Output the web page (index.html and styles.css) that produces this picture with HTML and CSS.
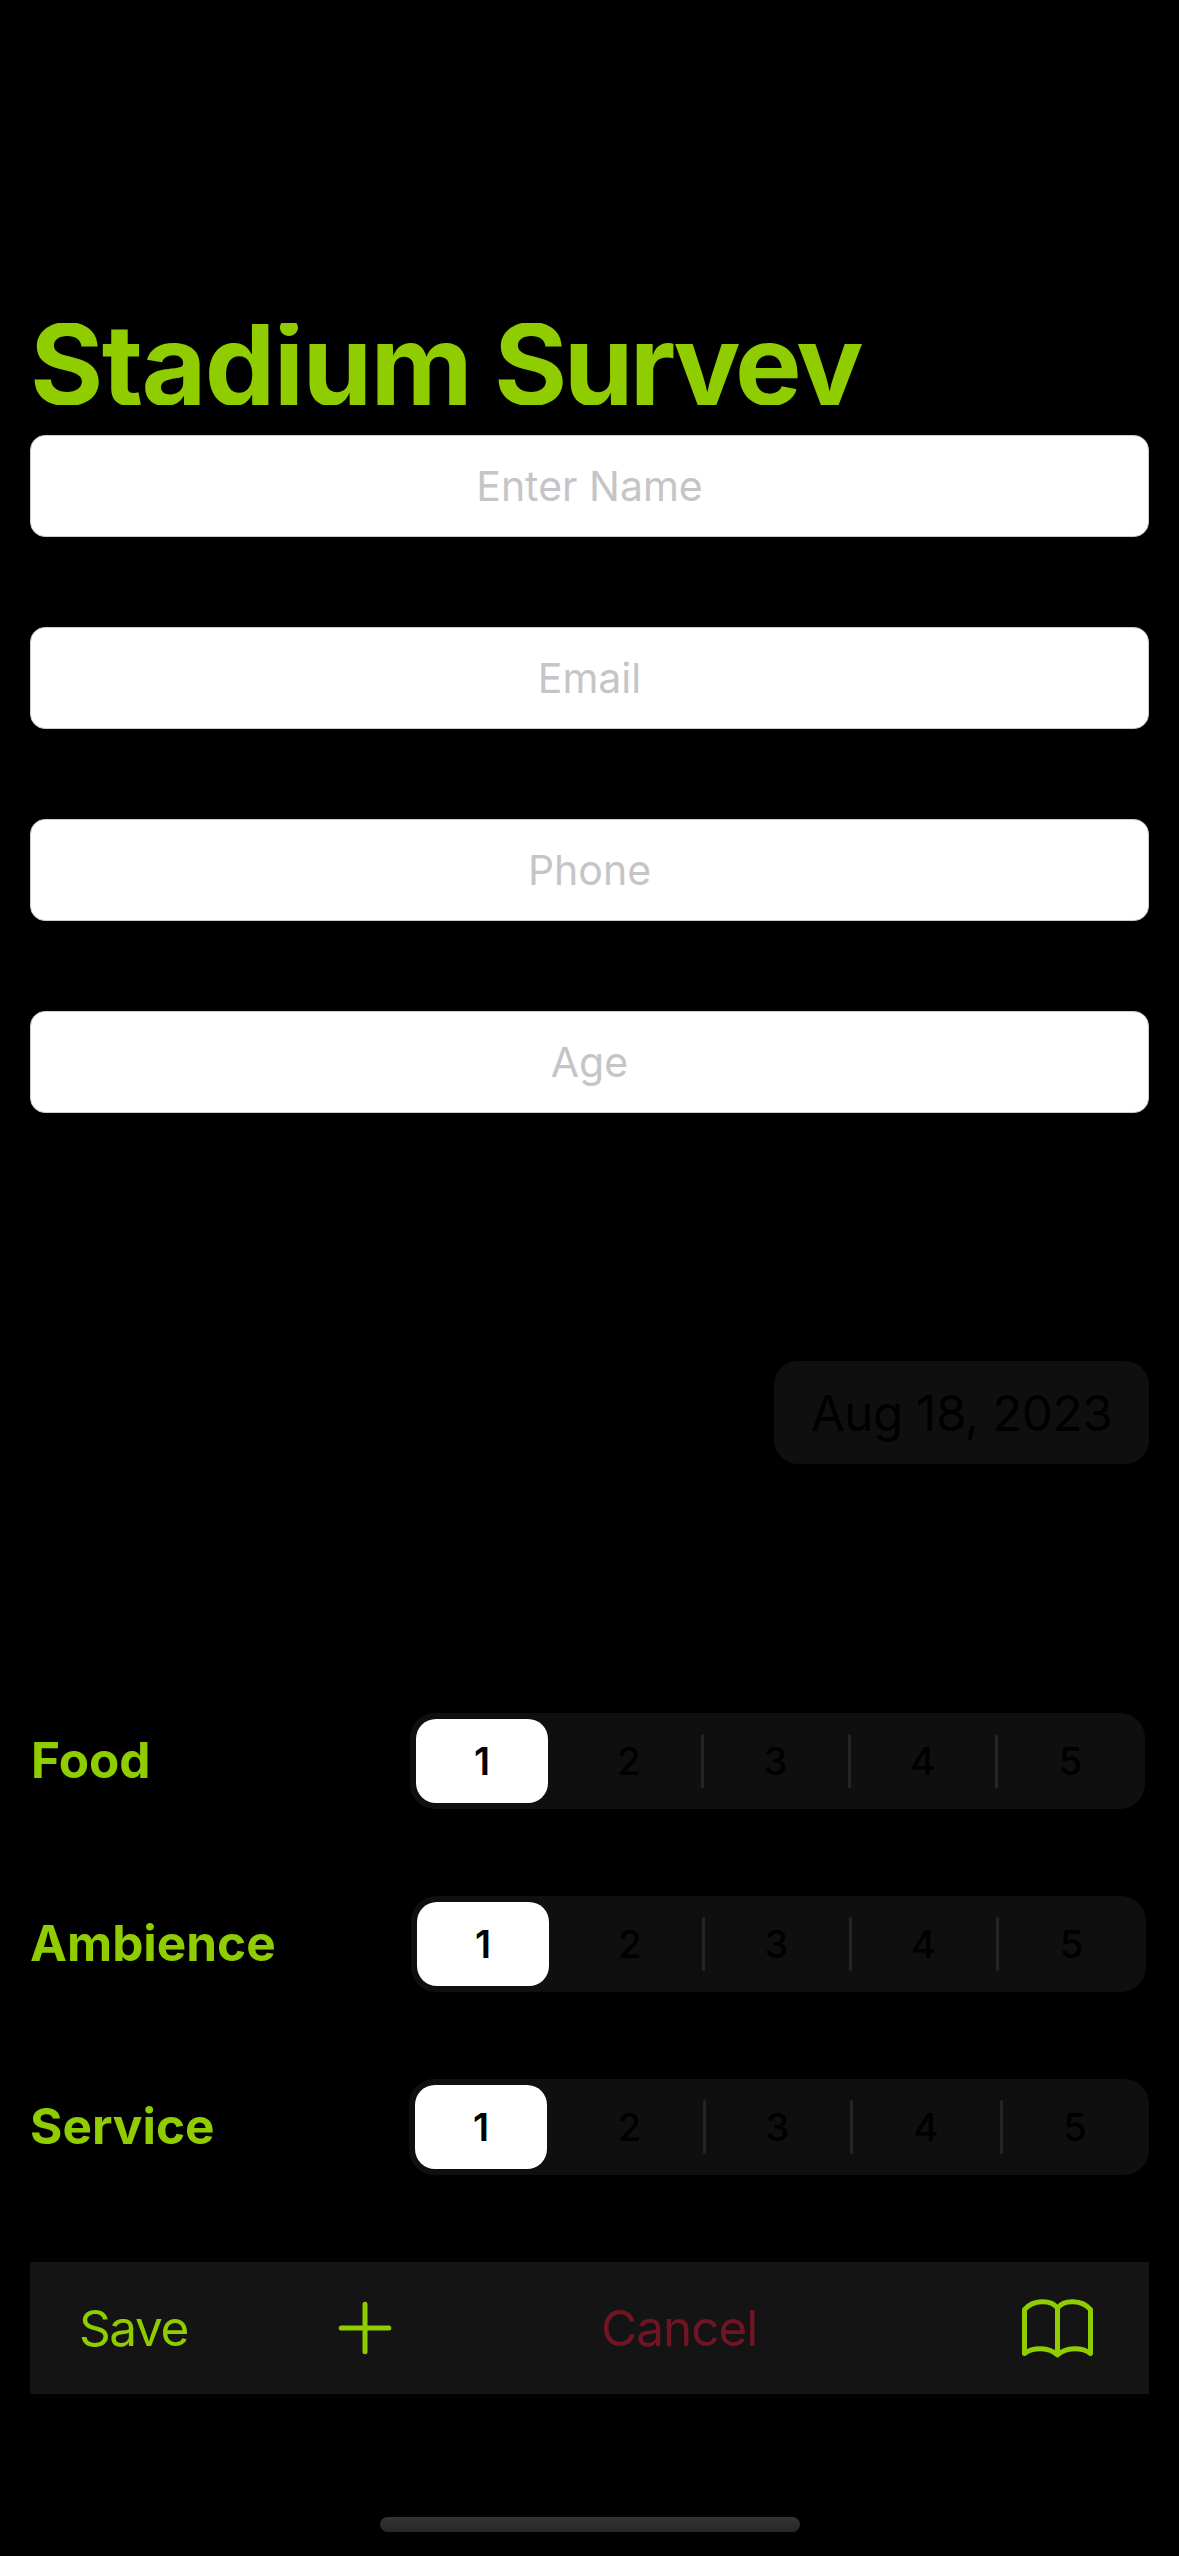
FILE: index.html
```html
<!DOCTYPE html>
<html lang="en">
<head>
<meta charset="utf-8">
<title>Stadium Survey</title>
<link rel="stylesheet" href="styles.css">
</head>
<body>
<main class="screen">
  <h1 class="title"><span class="title-first">Stadium</span> <span class="title-second">Survey</span></h1>

  <section class="fields">
    <div class="field"><span>Enter Name</span></div>
    <div class="field"><span>Email</span></div>
    <div class="field"><span>Phone</span></div>
    <div class="field"><span>Age</span></div>
  </section>

  <div class="date"><span>Aug 18, 2023</span></div>

  <section class="ratings">
    <div class="rating">
      <span class="label label-food">Food</span>
      <div class="segments s-food">
        <span class="seg selected">1</span><span class="seg">2</span><span class="seg split">3</span><span class="seg split">4</span><span class="seg split">5</span>
      </div>
    </div>
    <div class="rating">
      <span class="label">Ambience</span>
      <div class="segments s-ambience">
        <span class="seg selected">1</span><span class="seg">2</span><span class="seg split">3</span><span class="seg split">4</span><span class="seg split">5</span>
      </div>
    </div>
    <div class="rating">
      <span class="label">Service</span>
      <div class="segments s-service">
        <span class="seg selected">1</span><span class="seg">2</span><span class="seg split">3</span><span class="seg split">4</span><span class="seg split">5</span>
      </div>
    </div>
  </section>

  <nav class="toolbar">
    <span class="save">Save</span>
    <svg class="plus" viewBox="0 0 54 54" width="54" height="54"><path d="M27 3.2V50.8M3.2 27H50.8"/></svg>
    <span class="cancel">Cancel</span>
    <svg class="book" viewBox="0 0 72 60" width="72" height="60"><path d="M35.5 10C29 1.3 11 1.3 2.5 11.5V55.5C11 49 27 49 35.5 57C44 49 60 49 68.5 55.5V11.5C60 1.3 42 1.3 35.5 10V56"/></svg>
  </nav>

  <div class="home-indicator"></div>
</main>
</body>
</html>
```

FILE: styles.css
```css
* { box-sizing: border-box; }

body {
  margin: 0;
  background: #000;
  font-family: Inter, "Liberation Sans", sans-serif;
  white-space: nowrap;
}

.screen {
  display: flex;
  flex-direction: column;
  width: 1179px;
  height: 2556px;
  padding: 323px 30px 0;
  overflow: hidden;
}

.title {
  height: 82px;
  margin: 0 0 30px;
  overflow: hidden;
  color: #8fcc00;
  font-size: 112px;
  font-weight: 700;
  line-height: 82px;
  letter-spacing: -3.5px;
}

.title-first { letter-spacing: -1.7px; }
.title-second { letter-spacing: -3.6px; }

.fields {
  display: flex;
  flex-direction: column;
  gap: 90px;
}

.field {
  display: flex;
  align-items: center;
  justify-content: center;
  height: 102px;
  border: 1px solid #ccc;
  border-radius: 15px;
  background: #fff;
  color: #c5c5c7;
  font-size: 41px;
}

.date {
  display: flex;
  align-items: center;
  justify-content: center;
  align-self: flex-end;
  width: 375px;
  height: 103px;
  margin-top: 248px;
  border-radius: 24px;
  background: #0f0f0f;
  color: #000;
  font-size: 49.5px;
  letter-spacing: -0.5px;
}

.ratings {
  display: flex;
  flex-direction: column;
  gap: 87px;
  margin-top: 249px;
}

.rating {
  display: flex;
  align-items: center;
  justify-content: space-between;
  height: 96px;
}

.label {
  padding-bottom: 2px;
  color: #8fcc00;
  font-size: 49.5px;
  font-weight: 700;
}

.label-food { padding-left: 1px; }

.segments {
  display: grid;
  grid-template-columns: 132px 154px 147px 147px 1fr;
  height: 96px;
  padding: 6px 0 6px 6px;
  border-radius: 25px;
  background: #0f0f0f;
}

.s-food { width: 735px; margin-right: 4px; }
.s-ambience { width: 735px; margin-right: 3px; }
.s-service {
  grid-template-columns: 132px 157px 147px 150px 1fr;
  width: 740px;
}

.seg {
  display: flex;
  position: relative;
  align-items: center;
  justify-content: center;
  color: #000;
  font-size: 38px;
  font-weight: 500;
}

.seg:nth-child(2) { padding-left: 8px; }

.selected {
  border-radius: 20px;
  background: #fff;
  font-weight: 600;
}

.split::before {
  position: absolute;
  top: 15px;
  left: -1px;
  width: 3px;
  height: 54px;
  border-radius: 2px;
  background: #252525;
  content: "";
}

.toolbar {
  display: flex;
  align-items: center;
  height: 132px;
  margin-top: 87px;
  padding: 0 55px 0 49px;
  background: #141414;
  font-size: 49.5px;
}

.save { width: 259px; color: #8fcc00; letter-spacing: -1.4px; }
.cancel { margin-left: 209px; color: #711423; letter-spacing: -1px; }
.book { margin-left: auto; }

.plus, .book {
  fill: none;
  stroke: #8fcc00;
  stroke-width: 5;
  stroke-linecap: round;
  stroke-linejoin: round;
}

.home-indicator {
  width: 420px;
  height: 15px;
  margin: 123px 0 0 350px;
  border-radius: 8px;
  background: linear-gradient(#343434, #272727);
}
```
